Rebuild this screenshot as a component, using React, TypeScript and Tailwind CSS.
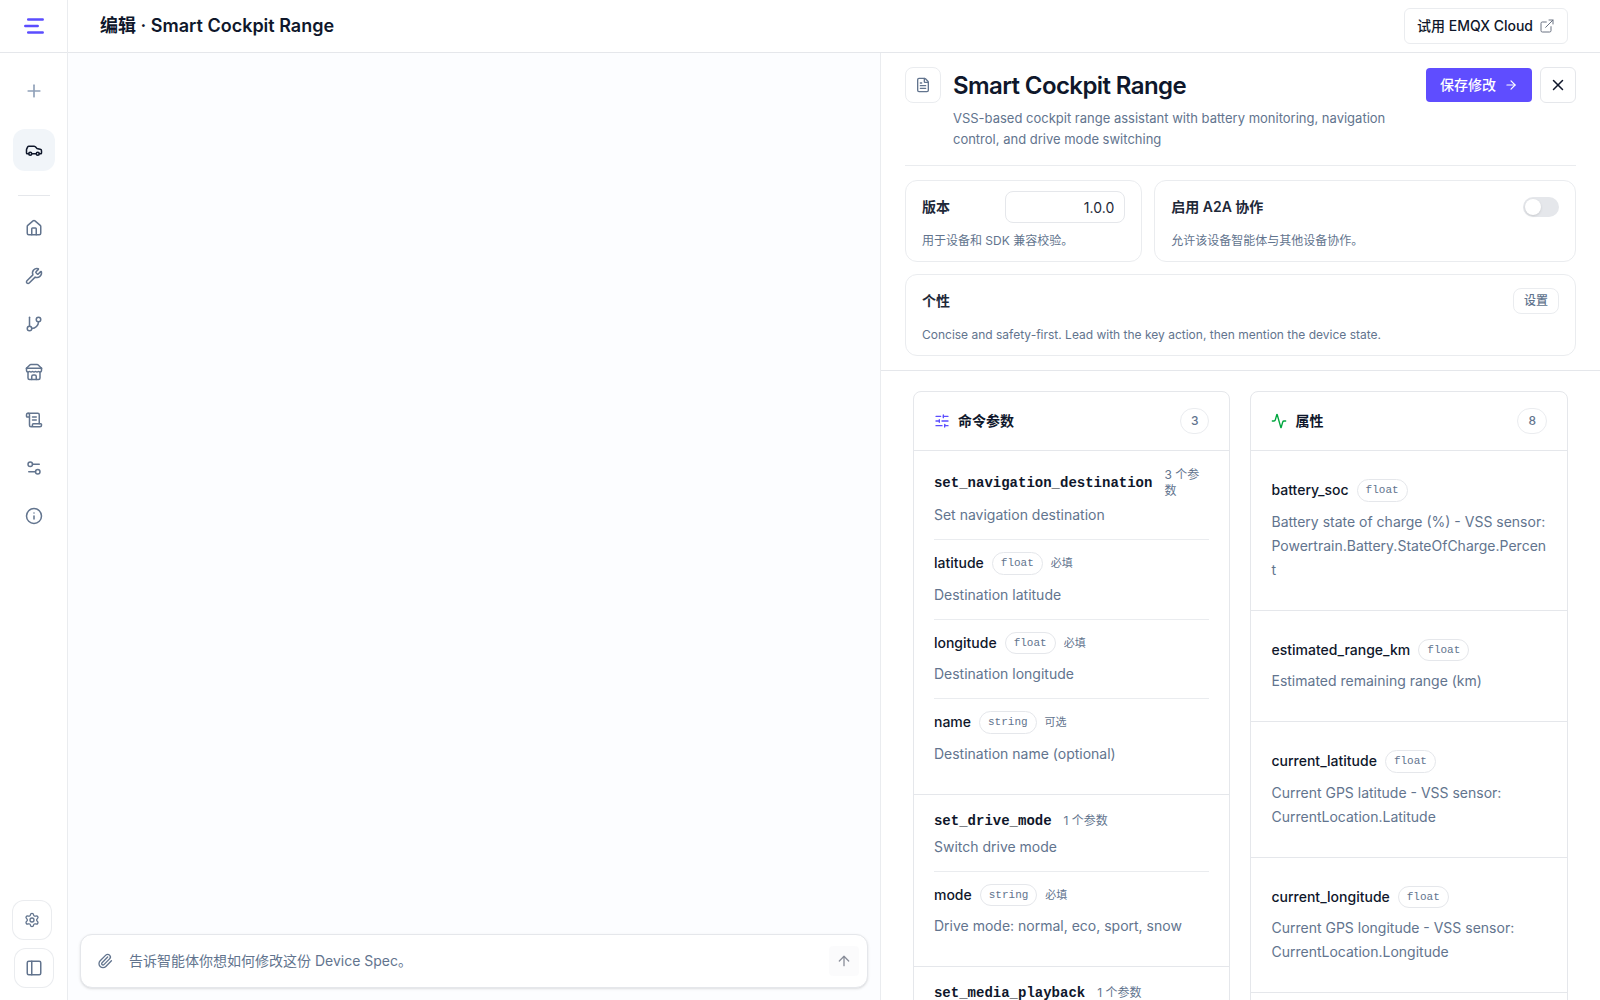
import type { ReactNode } from 'react';
import { useState } from 'react';
import {
    Activity,
    ArrowRight,
    ArrowUp,
    Car,
    ExternalLink,
    FileText,
    GitBranch,
    House,
    Info,
    PanelLeft,
    Paperclip,
    Plus,
    ScrollText,
    Settings,
    Settings2,
    SlidersHorizontal,
    Wrench,
    X,
} from 'lucide-react';

interface Param {
    name: string;
    type: string;
    required?: boolean;
    description: string;
}

interface Command {
    name: string;
    description: string;
    params: Param[];
}

const COMMANDS: Command[] = [
    {
        name: 'set_navigation_destination',
        description: 'Set navigation destination',
        params: [
            { name: 'latitude', type: 'float', required: true, description: 'Destination latitude' },
            { name: 'longitude', type: 'float', required: true, description: 'Destination longitude' },
            { name: 'name', type: 'string', required: false, description: 'Destination name (optional)' },
        ],
    },
    {
        name: 'set_drive_mode',
        description: 'Switch drive mode',
        params: [{ name: 'mode', type: 'string', required: true, description: 'Drive mode: normal, eco, sport, snow' }],
    },
    {
        name: 'set_media_playback',
        description: 'Control media playback',
        params: [{ name: 'action', type: 'string', required: true, description: 'Playback action' }],
    },
];

const PROPERTIES: Param[] = [
    {
        name: 'battery_soc',
        type: 'float',
        description: 'Battery state of charge (%) - VSS sensor: Powertrain.Battery.StateOfCharge.Percent',
    },
    { name: 'estimated_range_km', type: 'float', description: 'Estimated remaining range (km)' },
    {
        name: 'current_latitude',
        type: 'float',
        description: 'Current GPS latitude - VSS sensor: CurrentLocation.Latitude',
    },
    {
        name: 'current_longitude',
        type: 'float',
        description: 'Current GPS longitude - VSS sensor: CurrentLocation.Longitude',
    },
    { name: 'drive_mode', type: 'string', description: 'Current drive mode' },
];

function Logo() {
    return (
        <svg width="20" height="16" viewBox="0 0 20 16" fill="none" stroke="#5b4dff" strokeWidth="2.5" strokeLinecap="round">
            <path d="M4.2 1.5H18.7M1.3 8H13.7M4.2 14.5H18.7" />
        </svg>
    );
}

function StoreIcon() {
    return (
        <svg width="18" height="18" viewBox="0 0 24 24" fill="none" stroke="currentColor" strokeWidth="2" strokeLinecap="round" strokeLinejoin="round">
            <path d="m2 7 4.41-4.41A2 2 0 0 1 7.83 2h8.34a2 2 0 0 1 1.42.59L22 7" />
            <path d="M4 12v8a2 2 0 0 0 2 2h12a2 2 0 0 0 2-2v-8" />
            <path d="M15 22v-4a2 2 0 0 0-2-2h-2a2 2 0 0 0-2 2v4" />
            <path d="M2 7h20" />
            <path d="M22 7v3a2 2 0 0 1-2 2a2.7 2.7 0 0 1-1.59-.63.7.7 0 0 0-.82 0A2.7 2.7 0 0 1 16 12a2.7 2.7 0 0 1-1.59-.63.7.7 0 0 0-.82 0A2.7 2.7 0 0 1 12 12a2.7 2.7 0 0 1-1.59-.63.7.7 0 0 0-.82 0A2.7 2.7 0 0 1 8 12a2.7 2.7 0 0 1-1.59-.63.7.7 0 0 0-.82 0A2.7 2.7 0 0 1 4 12a2 2 0 0 1-2-2V7" />
        </svg>
    );
}

const NAV = [
    { label: '首页', icon: <House size={18} /> },
    { label: '工具', icon: <Wrench size={18} /> },
    { label: '流程', icon: <GitBranch size={18} /> },
    { label: '市场', icon: <StoreIcon /> },
    { label: '日志', icon: <ScrollText size={18} /> },
    { label: '配置', icon: <Settings2 size={18} /> },
    { label: '关于', icon: <Info size={18} /> },
];

function Sidebar() {
    return (
        <aside className="flex w-17 shrink-0 flex-col border-r border-gray-200/80 text-slate-500">
            <div className="flex h-13 shrink-0 items-center justify-center box-content border-b border-gray-200">
                <Logo />
            </div>
            <nav className="flex flex-1 flex-col items-center pt-4">
                <button aria-label="新建" className="flex size-11 items-center justify-center text-slate-400">
                    <Plus size={20} strokeWidth={2} />
                </button>
                <button aria-label="设备" className="mt-4 flex size-[42px] items-center justify-center rounded-xl bg-slate-100 text-slate-900">
                    <Car size={18} />
                </button>
                <div className="mt-6 h-px w-8 bg-gray-200" />
                <div className="mt-3 flex flex-col gap-2">
                    {NAV.map((item) => (
                        <button key={item.label} aria-label={item.label} className="flex size-10 items-center justify-center">
                            {item.icon}
                        </button>
                    ))}
                </div>
            </nav>
            <div className="flex flex-col gap-2 px-3 pb-3">
                <button aria-label="设置" className="flex size-10 items-center justify-center rounded-xl border border-gray-200/80 bg-white">
                    <Settings size={16} />
                </button>
                <button aria-label="侧边栏" className="flex size-10 items-center justify-center self-center rounded-xl border border-gray-200/80 bg-white">
                    <PanelLeft size={18} />
                </button>
            </div>
        </aside>
    );
}

function Composer() {
    return (
        <form className="mx-3 mb-3 flex h-[54px] items-center rounded-xl border border-gray-200 bg-white pr-2 pl-4 shadow-sm">
            <button type="button" aria-label="附件" className="text-slate-500">
                <Paperclip size={16} />
            </button>
            <input
                aria-label="修改说明"
                placeholder="告诉智能体你想如何修改这份 Device Spec。"
                className="ml-4 min-w-0 flex-1 text-sm outline-none placeholder:text-slate-500"
            />
            <button type="button" aria-label="发送" className="flex size-[30px] items-center justify-center rounded bg-gray-50/70 text-[#8b8f9b]">
                <ArrowUp size={16} />
            </button>
        </form>
    );
}

function SettingCard({ title, hint, control }: { title: ReactNode; hint: string; control: ReactNode }) {
    return (
        <div className="rounded-xl border border-gray-200/80 px-4 py-2.5">
            <div className="flex h-8 items-center justify-between">
                {title}
                {control}
            </div>
            <p className="mt-2 text-xs leading-5 text-slate-500">{hint}</p>
        </div>
    );
}

function TypePill({ children }: { children: ReactNode }) {
    return (
        <span className="rounded-full border border-gray-200 px-2 py-0.5 font-['Liberation_Mono','Noto_Sans_CJK_SC',monospace] text-[11px] leading-normal text-slate-500">
            {children}
        </span>
    );
}

function ParamInfo({ param }: { param: Param }) {
    return (
        <>
            <div className="flex items-center gap-2">
                <span className="text-sm font-medium">{param.name}</span>
                <TypePill>{param.type}</TypePill>
                {param.required !== undefined && (
                    <span className="text-[11px] text-slate-500">{param.required ? '必填' : '可选'}</span>
                )}
            </div>
            <p className="mt-2 text-sm leading-6 wrap-anywhere text-slate-500">{param.description}</p>
        </>
    );
}

function Column({ icon, title, count, children }: { icon: ReactNode; title: string; count: number; children: ReactNode }) {
    return (
        <section className="min-w-0 rounded-lg border border-gray-200">
            <header className="flex items-center justify-between border-b border-gray-200 px-5 py-4">
                <h3 className="flex items-center gap-2 text-sm font-semibold">
                    {icon}
                    {title}
                </h3>
                <span className="rounded-full border border-gray-200/80 px-2.5 py-1 text-xs font-medium text-slate-500">{count}</span>
            </header>
            <div className="divide-y divide-gray-200">{children}</div>
        </section>
    );
}

function SpecPanel() {
    const [a2a, setA2a] = useState(false);

    return (
        <section className="flex w-[47%] flex-col border-l border-gray-200/80">
            <div className="shrink-0 border-b border-gray-200 px-6 py-3.5">
                <div className="flex items-start border-b border-gray-200/80 pb-[15px]">
                    <div className="flex size-9 shrink-0 items-center justify-center rounded-lg border border-gray-200/80 text-slate-500">
                        <FileText size={16} />
                    </div>
                    <div className="ml-3 min-w-0 flex-1">
                        <h2 className="text-2xl leading-[38px] font-semibold tracking-tight">Smart Cockpit Range</h2>
                        <p className="mt-[3px] text-[13px] leading-[21px] text-slate-500">
                            VSS-based cockpit range assistant with battery monitoring, navigation control, and drive mode switching
                        </p>
                    </div>
                    <div className="ml-8 flex shrink-0 items-center gap-2">
                        <button className="flex h-[34px] items-center gap-2 rounded-sm bg-[#5f4dff] px-3.5 text-sm font-medium text-white">
                            保存修改
                            <ArrowRight size={14} />
                        </button>
                        <button aria-label="关闭" className="flex size-9 items-center justify-center rounded-md border border-gray-200">
                            <X size={18} />
                        </button>
                    </div>
                </div>

                <div className="mt-3.5 grid grid-cols-[9fr_16fr] gap-3">
                    <SettingCard
                        title={<label htmlFor="version" className="text-sm font-semibold text-gray-800">版本</label>}
                        hint="用于设备和 SDK 兼容校验。"
                        control={
                            <input
                                id="version"
                                defaultValue="1.0.0"
                                className="h-8 w-30 rounded-lg border border-gray-200 px-2.5 text-right text-sm text-gray-800 outline-none"
                            />
                        }
                    />
                    <SettingCard
                        title={<label htmlFor="a2a" className="text-sm font-semibold text-gray-800">启用 A2A 协作</label>}
                        hint="允许该设备智能体与其他设备协作。"
                        control={
                            <input
                                id="a2a"
                                type="checkbox"
                                checked={a2a}
                                onChange={(e) => setA2a(e.target.checked)}
                                className="flex h-5 w-9 appearance-none items-center rounded-full bg-gray-200 px-0.5 before:size-4 before:rounded-full before:bg-white before:shadow-sm checked:justify-end checked:bg-[#5f4dff]"
                            />
                        }
                    />
                    <div className="col-span-2">
                        <SettingCard
                            title={<h3 className="text-sm font-semibold text-gray-800">个性</h3>}
                            hint="Concise and safety-first. Lead with the key action, then mention the device state."
                            control={
                                <button className="rounded-lg border border-gray-200/80 px-2.5 py-1 text-xs font-medium text-slate-500">设置</button>
                            }
                        />
                    </div>
                </div>
            </div>

            <div className="min-h-0 flex-1 overflow-y-auto [scrollbar-width:none]">
                <div className="grid grid-cols-2 items-start gap-5 px-8 py-5">
                    <Column icon={<SlidersHorizontal size={16} className="text-[#5b4dff]" />} title="命令参数" count={3}>
                        {COMMANDS.map((cmd) => (
                            <div key={cmd.name} className="px-5 py-4">
                                <div className="flex items-center gap-3">
                                    <h4 className="font-['Liberation_Mono','Noto_Sans_CJK_SC',monospace] text-sm font-bold">{cmd.name}</h4>
                                    <span className="text-xs text-slate-500">{cmd.params.length} 个参数</span>
                                </div>
                                <p className="mt-1 text-sm leading-6 text-slate-500">{cmd.description}</p>
                                {cmd.params.map((param, i) => (
                                    <div key={param.name} className={i === 0 ? 'mt-3 border-t border-gray-200/80 py-3' : 'border-t border-gray-200/80 py-3'}>
                                        <ParamInfo param={param} />
                                    </div>
                                ))}
                            </div>
                        ))}
                    </Column>
                    <Column icon={<Activity size={16} className="text-green-600" />} title="属性" count={8}>
                        {PROPERTIES.map((param) => (
                            <div key={param.name} className="px-5 py-7">
                                <ParamInfo param={param} />
                            </div>
                        ))}
                    </Column>
                </div>
            </div>
        </section>
    );
}

export default function App() {
    return (
        <div className="flex h-screen overflow-hidden bg-white font-['Inter','Noto_Sans_CJK_SC',sans-serif] text-slate-900">
            <Sidebar />
            <div className="flex min-w-0 flex-1 flex-col">
                <header className="box-content flex h-13 shrink-0 items-center justify-between border-b border-gray-200 px-8">
                    <h1 className="text-lg font-semibold">编辑 · Smart Cockpit Range</h1>
                    <a href="#cloud" className="flex h-9 items-center gap-1.5 rounded-md border border-gray-200/80 px-3 text-sm font-medium">
                        试用 EMQX Cloud
                        <ExternalLink size={16} className="text-gray-500" strokeWidth={1.5} />
                    </a>
                </header>
                <div className="flex min-h-0 flex-1">
                    <main className="flex min-w-0 flex-1 flex-col justify-end bg-[#fcfdff]">
                        <Composer />
                    </main>
                    <SpecPanel />
                </div>
            </div>
        </div>
    );
}
